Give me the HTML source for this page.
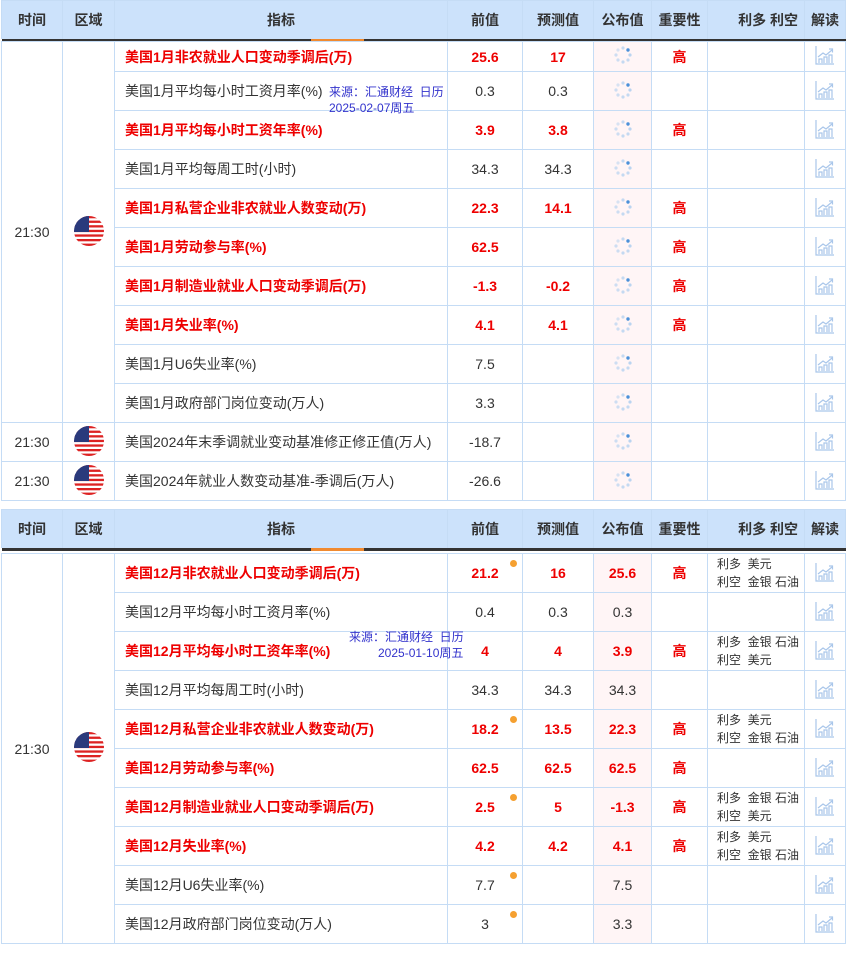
<!DOCTYPE html>
<html><head><meta charset="utf-8">
<style>
*{margin:0;padding:0;box-sizing:border-box}
body{width:855px;height:954px;background:#fff;position:relative;overflow:hidden;font-family:"Liberation Sans","Noto Sans CJK SC",sans-serif;font-size:14px;color:#333}
table{position:absolute;left:1px;border-collapse:collapse;table-layout:fixed;width:845px}
td,th{border:1px solid #c5dcf5;text-align:center;vertical-align:middle;padding:0;position:relative}
th{background:#cce2fb;height:38px;font-weight:bold;color:#333;font-size:14px;border-bottom:none}
tr.line td{height:3px;border:none;background:#333;padding:0}
td.ind{text-align:left;padding-left:10px;white-space:nowrap}
tr.r td.ind,tr.r td.v{color:#e00;font-weight:bold}
td.pub{background:#fff5f6}
.h{color:#e00;font-weight:bold}
.lk{text-align:left;padding-left:9px;font-size:12px;line-height:18px;color:#333}
.dot{position:absolute;right:5px;top:6px;width:7px;height:7px;border-radius:50%;background:#f5a030}
tbody td{height:39px}
tbody tr.first td{height:30px}
.src{position:absolute;color:#3333cc;font-size:12px;line-height:15px}
</style></head><body>
<svg width="0" height="0" style="position:absolute">
<defs>
<symbol id="sp" viewBox="0 0 20 20"><g fill="#9cc6ee"><circle cx="10" cy="3" r="1.6" opacity=".6"/><circle cx="15" cy="5" r="1.7" fill="#4a90d9"/><circle cx="17" cy="10" r="1.6" opacity=".7"/><circle cx="15" cy="15" r="1.6" opacity=".6"/><circle cx="10" cy="17" r="1.6" opacity=".6"/><circle cx="5" cy="15" r="1.6" opacity=".5"/><circle cx="3" cy="10" r="1.6" opacity=".5"/><circle cx="5" cy="5" r="1.6" opacity=".4"/></g></symbol>
<symbol id="ch" viewBox="0 0 20 20" fill="none" stroke="#a9c6ea" stroke-width="1.2"><path d="M1 1V19H19"/><path d="M4 18v-4h3v4M9 18v-6h3v6M14 18v-8h3v8"/><path d="M3 12l5-4 3 2 6-5"/><path d="M14 4h3.5v3.5"/></symbol>
<symbol id="fl" viewBox="0 0 30 30"><clipPath id="cc"><circle cx="15" cy="15" r="15"/></clipPath><g clip-path="url(#cc)"><rect width="30" height="30" fill="#fff"/><g fill="#d22">
<rect y="0" width="30" height="2.3"/><rect y="4.6" width="30" height="2.3"/><rect y="9.2" width="30" height="2.3"/><rect y="13.8" width="30" height="2.3"/><rect y="18.4" width="30" height="2.3"/><rect y="23" width="30" height="2.3"/><rect y="27.6" width="30" height="2.4"/></g><rect width="15" height="16" fill="#2a3a7c"/></g></symbol>
</defs></svg>

<table style="top:0">
<colgroup><col style="width:61px"><col style="width:52px"><col style="width:333px"><col style="width:75px"><col style="width:71px"><col style="width:58px"><col style="width:56px"><col style="width:97px"><col style="width:41px"></colgroup>
<tr><th>时间</th><th>区域</th><th>指标</th><th>前值</th><th>预测值</th><th>公布值</th><th>重要性</th><th style="text-align:right;padding-right:6px">利多 利空</th><th>解读</th></tr>
<tr class="line"><td></td><td></td><td style="background:linear-gradient(90deg,#333 196px,#f08a30 196px,#f08a30 249px,#333 249px)"></td><td></td><td></td><td></td><td></td><td></td><td></td></tr>
<tbody>
<tr class="r first"><td rowspan="10">21:30</td><td rowspan="10"><svg width="30" height="30"><use href="#fl"/></svg></td><td class="ind">美国1月非农就业人口变动季调后(万)</td><td class="v">25.6</td><td class="v">17</td><td class="pub"><svg width="20" height="20"><use href="#sp"/></svg></td><td class="h">高</td><td></td><td><svg width="20" height="20"><use href="#ch"/></svg></td></tr>
<tr><td class="ind">美国1月平均每小时工资月率(%)</td><td>0.3</td><td>0.3</td><td class="pub"><svg width="20" height="20"><use href="#sp"/></svg></td><td></td><td></td><td><svg width="20" height="20"><use href="#ch"/></svg></td></tr>
<tr class="r"><td class="ind">美国1月平均每小时工资年率(%)</td><td class="v">3.9</td><td class="v">3.8</td><td class="pub"><svg width="20" height="20"><use href="#sp"/></svg></td><td class="h">高</td><td></td><td><svg width="20" height="20"><use href="#ch"/></svg></td></tr>
<tr><td class="ind">美国1月平均每周工时(小时)</td><td>34.3</td><td>34.3</td><td class="pub"><svg width="20" height="20"><use href="#sp"/></svg></td><td></td><td></td><td><svg width="20" height="20"><use href="#ch"/></svg></td></tr>
<tr class="r"><td class="ind">美国1月私营企业非农就业人数变动(万)</td><td class="v">22.3</td><td class="v">14.1</td><td class="pub"><svg width="20" height="20"><use href="#sp"/></svg></td><td class="h">高</td><td></td><td><svg width="20" height="20"><use href="#ch"/></svg></td></tr>
<tr class="r"><td class="ind">美国1月劳动参与率(%)</td><td class="v">62.5</td><td></td><td class="pub"><svg width="20" height="20"><use href="#sp"/></svg></td><td class="h">高</td><td></td><td><svg width="20" height="20"><use href="#ch"/></svg></td></tr>
<tr class="r"><td class="ind">美国1月制造业就业人口变动季调后(万)</td><td class="v">-1.3</td><td class="v">-0.2</td><td class="pub"><svg width="20" height="20"><use href="#sp"/></svg></td><td class="h">高</td><td></td><td><svg width="20" height="20"><use href="#ch"/></svg></td></tr>
<tr class="r"><td class="ind">美国1月失业率(%)</td><td class="v">4.1</td><td class="v">4.1</td><td class="pub"><svg width="20" height="20"><use href="#sp"/></svg></td><td class="h">高</td><td></td><td><svg width="20" height="20"><use href="#ch"/></svg></td></tr>
<tr><td class="ind">美国1月U6失业率(%)</td><td>7.5</td><td></td><td class="pub"><svg width="20" height="20"><use href="#sp"/></svg></td><td></td><td></td><td><svg width="20" height="20"><use href="#ch"/></svg></td></tr>
<tr><td class="ind">美国1月政府部门岗位变动(万人)</td><td>3.3</td><td></td><td class="pub"><svg width="20" height="20"><use href="#sp"/></svg></td><td></td><td></td><td><svg width="20" height="20"><use href="#ch"/></svg></td></tr>
<tr><td>21:30</td><td><svg width="30" height="30"><use href="#fl"/></svg></td><td class="ind">美国2024年末季调就业变动基准修正修正值(万人)</td><td>-18.7</td><td></td><td class="pub"><svg width="20" height="20"><use href="#sp"/></svg></td><td></td><td></td><td><svg width="20" height="20"><use href="#ch"/></svg></td></tr>
<tr><td>21:30</td><td><svg width="30" height="30"><use href="#fl"/></svg></td><td class="ind">美国2024年就业人数变动基准-季调后(万人)</td><td>-26.6</td><td></td><td class="pub"><svg width="20" height="20"><use href="#sp"/></svg></td><td></td><td></td><td><svg width="20" height="20"><use href="#ch"/></svg></td></tr>
</tbody></table>
<div class="src" style="left:329px;top:85px">来源：汇通财经&nbsp; 日历</div>
<div class="src" style="left:329px;top:101px">2025-02-07周五</div>

<table style="top:509px">
<colgroup><col style="width:61px"><col style="width:52px"><col style="width:333px"><col style="width:75px"><col style="width:71px"><col style="width:58px"><col style="width:56px"><col style="width:97px"><col style="width:41px"></colgroup>
<tr><th>时间</th><th>区域</th><th>指标</th><th>前值</th><th>预测值</th><th>公布值</th><th>重要性</th><th style="text-align:right;padding-right:6px">利多 利空</th><th>解读</th></tr>
<tr class="line"><td></td><td></td><td style="background:linear-gradient(90deg,#333 196px,#f08a30 196px,#f08a30 249px,#333 249px)"></td><td></td><td></td><td></td><td></td><td></td><td></td></tr>
<tr><td colspan="9" style="height:3px;border:none;border-bottom:1px solid #c5dcf5"></td></tr>
<tbody>
<tr class="r"><td rowspan="10">21:30</td><td rowspan="10"><svg width="30" height="30"><use href="#fl"/></svg></td><td class="ind">美国12月非农就业人口变动季调后(万)</td><td class="v">21.2<span class="dot"></span></td><td class="v">16</td><td class="pub v">25.6</td><td class="h">高</td><td class="lk">利多&nbsp; 美元<br>利空&nbsp; 金银 石油</td><td><svg width="20" height="20"><use href="#ch"/></svg></td></tr>
<tr><td class="ind">美国12月平均每小时工资月率(%)</td><td>0.4</td><td>0.3</td><td class="pub">0.3</td><td></td><td></td><td><svg width="20" height="20"><use href="#ch"/></svg></td></tr>
<tr class="r"><td class="ind">美国12月平均每小时工资年率(%)</td><td class="v">4</td><td class="v">4</td><td class="pub v">3.9</td><td class="h">高</td><td class="lk">利多&nbsp; 金银 石油<br>利空&nbsp; 美元</td><td><svg width="20" height="20"><use href="#ch"/></svg></td></tr>
<tr><td class="ind">美国12月平均每周工时(小时)</td><td>34.3</td><td>34.3</td><td class="pub">34.3</td><td></td><td></td><td><svg width="20" height="20"><use href="#ch"/></svg></td></tr>
<tr class="r"><td class="ind">美国12月私营企业非农就业人数变动(万)</td><td class="v">18.2<span class="dot"></span></td><td class="v">13.5</td><td class="pub v">22.3</td><td class="h">高</td><td class="lk">利多&nbsp; 美元<br>利空&nbsp; 金银 石油</td><td><svg width="20" height="20"><use href="#ch"/></svg></td></tr>
<tr class="r"><td class="ind">美国12月劳动参与率(%)</td><td class="v">62.5</td><td class="v">62.5</td><td class="pub v">62.5</td><td class="h">高</td><td></td><td><svg width="20" height="20"><use href="#ch"/></svg></td></tr>
<tr class="r"><td class="ind">美国12月制造业就业人口变动季调后(万)</td><td class="v">2.5<span class="dot"></span></td><td class="v">5</td><td class="pub v">-1.3</td><td class="h">高</td><td class="lk">利多&nbsp; 金银 石油<br>利空&nbsp; 美元</td><td><svg width="20" height="20"><use href="#ch"/></svg></td></tr>
<tr class="r"><td class="ind">美国12月失业率(%)</td><td class="v">4.2</td><td class="v">4.2</td><td class="pub v">4.1</td><td class="h">高</td><td class="lk">利多&nbsp; 美元<br>利空&nbsp; 金银 石油</td><td><svg width="20" height="20"><use href="#ch"/></svg></td></tr>
<tr><td class="ind">美国12月U6失业率(%)</td><td>7.7<span class="dot"></span></td><td></td><td class="pub">7.5</td><td></td><td></td><td><svg width="20" height="20"><use href="#ch"/></svg></td></tr>
<tr><td class="ind">美国12月政府部门岗位变动(万人)</td><td>3<span class="dot"></span></td><td></td><td class="pub">3.3</td><td></td><td></td><td><svg width="20" height="20"><use href="#ch"/></svg></td></tr>
</tbody></table>
<div class="src" style="left:349px;top:630px">来源：汇通财经&nbsp; 日历</div>
<div class="src" style="left:378px;top:646px">2025-01-10周五</div>
</body></html>
